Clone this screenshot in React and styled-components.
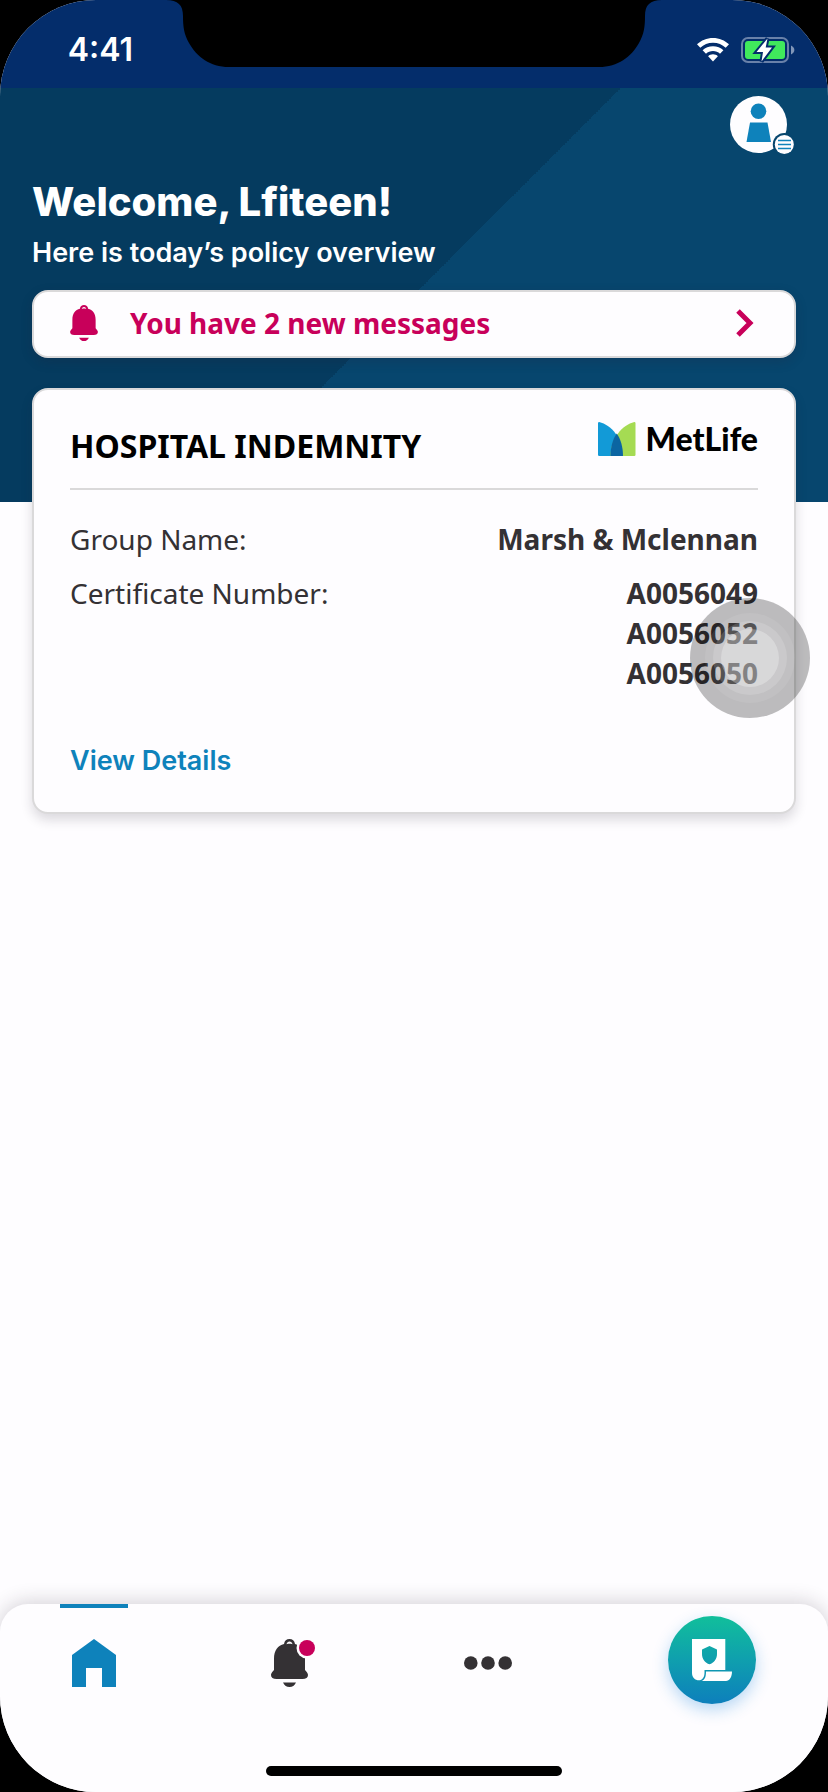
import React from "react";
import styled, { createGlobalStyle } from "styled-components";

const display = '"Inter", "Open Sans", sans-serif';
const body = '"Noto Sans", "Open Sans", sans-serif';

const color = {
  surface: "#fefdff",
  status: "#042d6b",
  navy: "#053b5f",
  navyLight: "#07466e",
  line: "#dad9da",
  pink: "#c8005a",
  blue: "#0e82bb",
  ink: "#343134",
};

const GlobalStyle = createGlobalStyle`
  *, *::before, *::after { box-sizing: border-box; }
  body { margin: 0; background: #000; font-family: ${body}; color: ${color.ink}; }
  h1, h2, p, dl, dd { margin: 0; }
  svg { display: block; flex: none; }
`;

const Screen = styled.div`
  position: relative;
  display: flex;
  flex-direction: column;
  min-height: 100vh;
  overflow: hidden;
  border-radius: 96px;
  background: ${color.surface};
`;

const StatusBar = styled.header`
  display: grid;
  grid-template-columns: 1fr auto 1fr;
  height: 88px;
  background: ${color.status};
  color: #fff;
`;

const StatusSide = styled.div`
  display: flex;
  align-items: center;
  justify-content: flex-end;
  gap: 12px;
  padding: 12px 33px 0 0;
`;

const Time = styled.time`
  font: 600 32px/40px ${display};
`;

const Main = styled.main`
  flex: 1;
  padding: 8px 32px 32px;
  background: linear-gradient(135deg, ${color.navy} 50%, ${color.navyLight} 50%) 0 0 / 100% 414px
    no-repeat;
`;

const Toolbar = styled.div`
  display: flex;
  justify-content: flex-end;
`;

const IconButton = styled.button`
  padding: 0;
  border: 0;
  background: none;
  cursor: pointer;
`;

const Heading = styled.h1`
  margin-top: 22px;
  font: 800 40px/48px ${display};
  color: #fff;
`;

const Subheading = styled.p`
  margin-top: 10px;
  font: 600 27px/34px ${display};
  color: #fff;
`;

const MessageBar = styled.button`
  display: flex;
  align-items: center;
  gap: 32px;
  width: 100%;
  height: 68px;
  margin-top: 20px;
  padding: 0 40px 2px 36px;
  border: 2px solid ${color.line};
  border-radius: 16px;
  background: ${color.surface};
  box-shadow: 0 4px 12px rgba(40, 30, 50, 0.2);
  color: ${color.pink};
  font: 700 28px/40px ${body};
  text-align: left;
  cursor: pointer;
`;

const MessageText = styled.span`
  flex: 1;
`;

const Card = styled.section`
  margin-top: 30px;
  padding: 32px 36px 34px;
  border: 2px solid ${color.line};
  border-radius: 16px;
  background: ${color.surface};
  box-shadow: 0 6px 12px rgba(40, 30, 50, 0.16);
`;

const CardHeader = styled.div`
  display: flex;
  align-items: flex-start;
  justify-content: space-between;
  padding-bottom: 20px;
  border-bottom: 2px solid ${color.line};
`;

const CardTitle = styled.h2`
  padding-top: 2px;
  font: 700 32px/44px ${body};
  color: #000;
`;

const Logo = styled.div`
  display: flex;
  align-items: center;
  gap: 10px;
  font: 900 32px/34px "Lato", sans-serif;
  color: #000;
`;

const Facts = styled.dl`
  display: grid;
  gap: 14px;
  margin-top: 29px;
  font-size: 28px;
  line-height: 40px;
`;

const Fact = styled.div`
  display: flex;
  justify-content: space-between;
`;

const FactValues = styled.dd`
  font-weight: 700;
  text-align: right;
`;

const DetailsLink = styled.a`
  display: inline-block;
  margin-top: 51px;
  font: 600 27px/34px ${display};
  color: ${color.blue};
  text-decoration: none;
`;

const TouchButton = styled.button`
  position: absolute;
  top: 598px;
  right: 18px;
  display: grid;
  place-items: center;
  width: 120px;
  height: 120px;
  padding: 0;
  border: 0;
  border-radius: 50%;
  background: rgba(0, 0, 0, 0.26);
`;

const TouchRing = styled.span`
  display: grid;
  place-items: center;
  width: ${(p) => p.$size}px;
  height: ${(p) => p.$size}px;
  border-radius: 50%;
  background: rgba(255, 255, 255, ${(p) => p.$alpha});
`;

const BottomBar = styled.footer`
  border-radius: 28px 28px 0 0;
  background: ${color.surface};
  box-shadow: 0 -2px 20px rgba(40, 30, 50, 0.2);
`;

const Nav = styled.nav`
  display: flex;
  justify-content: space-between;
  height: 120px;
  padding: 0 72px 0 60px;
`;

const Tabs = styled.div`
  flex: 0 1 462px;
  display: flex;
  justify-content: space-between;
`;

const Tab = styled.a`
  display: flex;
  justify-content: center;
  align-items: flex-start;
  width: 68px;
  height: 100px;
  padding-top: 31px;
  border-top: 4px solid ${(p) => (p.$active ? color.blue : "transparent")};
`;

const PolicyButton = styled.button`
  width: 88px;
  height: 88px;
  margin-top: 12px;
  padding: 0;
  border: 0;
  border-radius: 50%;
  background: linear-gradient(#11bf9b, #0f9fae 50%, #0d7fbc);
  box-shadow: 0 6px 16px rgba(20, 130, 220, 0.3);
  cursor: pointer;
`;

const HomeArea = styled.div`
  display: flex;
  justify-content: center;
  padding: 42px 0 16px;
`;

const HomeIndicator = styled.div`
  width: 296px;
  height: 10px;
  border-radius: 5px;
  background: #000;
`;

const Notch = () => (
  <svg width="496" height="67" viewBox="0 0 496 67" aria-hidden="true">
    <path d="M0 0C12 0 17 5 17 16C17 27 18 34 23 43C31 57 44 67 63 67H433C452 67 465 57 473 43C478 34 479 27 479 16C479 5 484 0 496 0Z" />
  </svg>
);

const WifiIcon = () => (
  <svg width="32" height="24" viewBox="0 0 32 24" fill="#fff" aria-hidden="true">
    <path d="M16 0C22.200 0 27.800 2.400 32 6.300L28.700 9.800C25.400 6.700 20.900 4.800 16 4.800S6.600 6.700 3.300 9.800L0 6.300C4.200 2.400 9.800 0 16 0Z" />
    <path d="M16 8.200C20 8.200 23.700 9.700 26.400 12.200L23 15.700C21.200 14 18.700 13 16 13S10.800 14 9 15.700L5.600 12.200C8.300 9.700 12 8.200 16 8.200Z" />
    <path d="M16 16.300C17.900 16.300 19.600 17 20.900 18.200L16 23.500L11.100 18.200C12.400 17 14.100 16.300 16 16.300Z" />
  </svg>
);

const BatteryIcon = () => (
  <svg width="54" height="26" viewBox="0 0 54 26" aria-hidden="true">
    <rect x="1" y="1" width="46" height="24" rx="6" fill="none" stroke="#6981a9" strokeWidth="2" />
    <rect x="4" y="4" width="40" height="18" rx="3" fill="#40e95c" />
    <path d="M50 8.500C54.500 10.500 54.500 15.500 50 17.500Z" fill="#8196b8" />
    <path
      d="M26.500 1.500L15.500 15H22L20.500 24.500L31 10.500H24.700Z"
      fill="#fff"
      stroke={color.status}
      strokeWidth="4"
      paintOrder="stroke"
    />
  </svg>
);

const ProfileIcon = () => (
  <svg width="66" height="60" viewBox="0 0 66 60" aria-hidden="true">
    <circle cx="28.500" cy="28.500" r="28.500" fill={color.surface} />
    <circle cx="28.500" cy="15.200" r="7.800" fill={color.blue} />
    <path d="M20 26.500H37.500L41 46H16.500Z" fill={color.blue} />
    <circle cx="54.300" cy="48.500" r="11.500" fill={color.navyLight} />
    <circle cx="54.300" cy="48.500" r="9.500" fill={color.surface} />
    <path d="M48 44.500H61M48 48.500H61M48 52.500H61" stroke={color.blue} strokeWidth="1.600" />
  </svg>
);

const bellBody =
  "M5.500 40C2 40 0 38.500 0 36C0 34 1.500 33 3 31V20C3 11 7 6.500 13 5C13.500 1.500 15.500 0 18.500 0S23.500 1.500 24 5C30 6.500 34 11 34 20V31C35.500 33 37 34 37 36C37 38.500 35 40 31.500 40ZM15.500 5.200C17.500 4.700 19.500 4.700 21.500 5.200C21 3.500 20 2.500 18.500 2.500S16 3.500 15.500 5.200ZM12 43.500H25C23.500 46.500 21.500 48 18.500 48S13.500 46.500 12 43.500Z";

const AlertBell = () => (
  <svg width="28" height="36" viewBox="0 0 37 48" fill={color.pink} aria-hidden="true">
    <path fillRule="evenodd" d={bellBody} />
  </svg>
);

const NavBell = () => (
  <svg width="48" height="48" viewBox="-4 0 48 48" aria-hidden="true">
    <path fillRule="evenodd" d={bellBody} fill={color.ink} />
    <circle cx="36" cy="9" r="10.500" fill={color.surface} />
    <circle cx="36" cy="9" r="8" fill={color.pink} />
  </svg>
);

const ChevronIcon = () => (
  <svg width="18" height="28" viewBox="0 0 18 28" aria-hidden="true">
    <path d="M2 2L14 14L2 26" fill="none" stroke={color.pink} strokeWidth="5" />
  </svg>
);

const MetLifeMark = () => (
  <svg width="38" height="34" viewBox="0 0 38 34" aria-hidden="true">
    <path d="M0 1.200Q0 0 1.200 0C13 3 25 16 25 34H1.200Q0 34 0 32.800Z" fill="#129ad7" />
    <path d="M37.500 1.200Q37.500 0 36.300 0C24.500 3 12.500 16 12.500 34H36.300Q37.500 34 37.500 32.800Z" fill="#a5db53" />
    <path d="M18.750 11.500C22.700 17 25 25 25 34H12.500C12.500 25 14.800 17 18.750 11.500Z" fill="#0b65a2" />
  </svg>
);

const HomeIcon = () => (
  <svg width="44" height="48" viewBox="0 0 44 48" aria-hidden="true">
    <path d="M22 0L44 16V48H30V29H14V48H0V16Z" fill={color.blue} />
  </svg>
);

const MoreIcon = () => (
  <svg width="48" height="48" viewBox="0 0 48 48" fill={color.ink} aria-hidden="true">
    <circle cx="6.800" cy="24" r="6.800" />
    <circle cx="24" cy="24" r="6.800" />
    <circle cx="41.200" cy="24" r="6.800" />
  </svg>
);

const PolicyIcon = () => (
  <svg width="88" height="88" viewBox="0 0 88 88" fill="#fff" aria-hidden="true">
    <path
      fillRule="evenodd"
      d="M24 23H57.300V54H36.500V57C36.500 61.500 34 64.300 31 64.300C27 64.300 24 61.500 24 57ZM41.500 30L34 33.500V38C34 43 37 46.800 41.500 48.300C46 46.800 49 43 49 38V33.500Z"
    />
    <path d="M38 55.500H64C64 61 61.500 65 58 65H33.500C37 64 38 60.500 38 55.500Z" />
  </svg>
);

const facts = [
  { label: "Group Name:", values: ["Marsh & Mclennan"] },
  { label: "Certificate Number:", values: ["A0056049", "A0056052", "A0056050"] },
];

export default function App() {
  return (
    <Screen>
      <GlobalStyle />
      <StatusBar>
        <StatusSide>
          <Time>4:41</Time>
        </StatusSide>
        <Notch />
        <StatusSide>
          <WifiIcon />
          <BatteryIcon />
        </StatusSide>
      </StatusBar>

      <Main>
        <Toolbar>
          <IconButton type="button" aria-label="Profile menu">
            <ProfileIcon />
          </IconButton>
        </Toolbar>
        <Heading>Welcome, Lfiteen!</Heading>
        <Subheading>Here is today’s policy overview</Subheading>

        <MessageBar type="button">
          <AlertBell />
          <MessageText>You have 2 new messages</MessageText>
          <ChevronIcon />
        </MessageBar>

        <Card>
          <CardHeader>
            <CardTitle>HOSPITAL INDEMNITY</CardTitle>
            <Logo>
              <MetLifeMark />
              <span>MetLife</span>
            </Logo>
          </CardHeader>
          <Facts>
            {facts.map((fact) => (
              <Fact key={fact.label}>
                <dt>{fact.label}</dt>
                <FactValues>
                  {fact.values.map((value) => (
                    <div key={value}>{value}</div>
                  ))}
                </FactValues>
              </Fact>
            ))}
          </Facts>
          <DetailsLink href="#details">View Details</DetailsLink>
        </Card>
      </Main>

      <BottomBar>
        <Nav aria-label="Main">
          <Tabs>
            <Tab href="#home" aria-label="Home" aria-current="page" $active>
              <HomeIcon />
            </Tab>
            <Tab href="#notifications" aria-label="Notifications">
              <NavBell />
            </Tab>
            <Tab href="#more" aria-label="More">
              <MoreIcon />
            </Tab>
          </Tabs>
          <PolicyButton type="button" aria-label="Policies">
            <PolicyIcon />
          </PolicyButton>
        </Nav>
        <HomeArea>
          <HomeIndicator />
        </HomeArea>
      </BottomBar>

      <TouchButton type="button" aria-label="Assistive touch">
        <TouchRing $size={90} $alpha={0.08}>
          <TouchRing $size={74} $alpha={0.15}>
            <TouchRing $size={58} $alpha={0.28} />
          </TouchRing>
        </TouchRing>
      </TouchButton>
    </Screen>
  );
}
